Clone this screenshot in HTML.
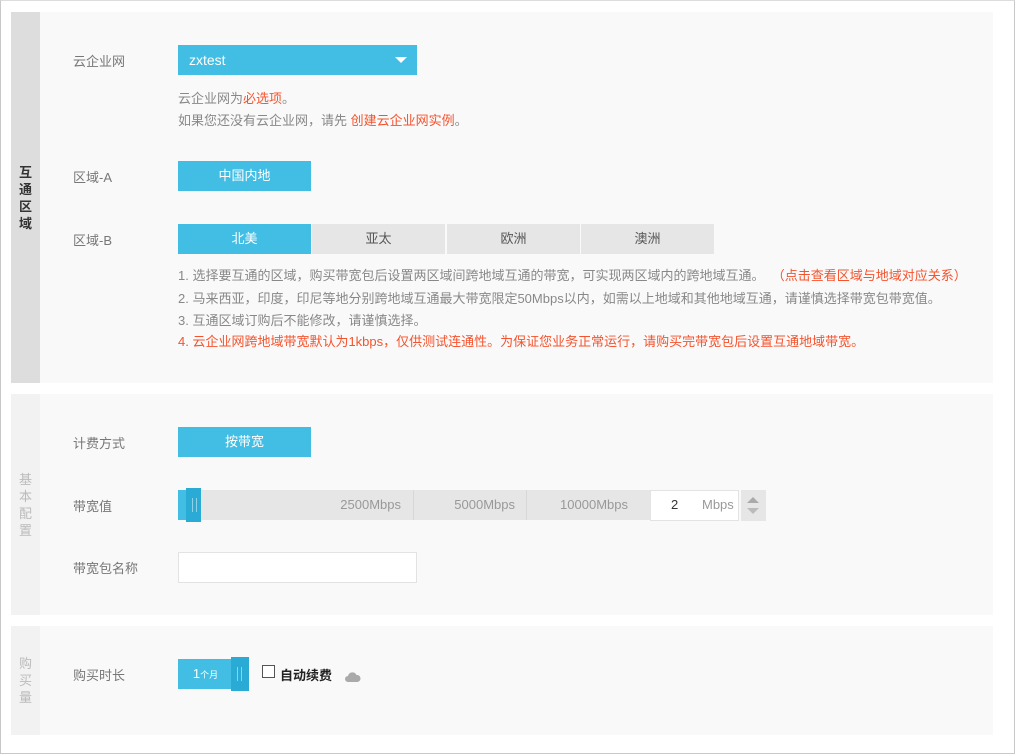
<!DOCTYPE html>
<html><head><meta charset="utf-8"><style>
*{margin:0;padding:0;box-sizing:border-box}
body{width:1015px;height:754px;background:#fff;font-family:"Liberation Sans","Noto Sans CJK SC",sans-serif;font-size:13px;color:#666;position:relative;overflow:hidden}
.frame{position:absolute;left:0;top:0;width:1015px;height:754px;border:1px solid #c8c8c8;border-top-color:#ddd}
.sec{position:absolute;left:11px;width:982px;background:#f9f9f9}
.lab{position:absolute;left:0;top:0;bottom:0;width:29px;background:#f2f2f2;color:#bbb;font-size:13px;display:flex;align-items:center;justify-content:center;text-align:center;line-height:17px}
.a{position:absolute;font-size:13px;color:#777}
.btn{position:absolute;height:30px;line-height:30px;text-align:center;color:#fff;background:#42bde3;font-size:13px}
.g{background:#e6e6e6;color:#555}
.t{position:absolute;font-size:13px;color:#888;white-space:nowrap}
.r{color:#f5532d}
.s{position:absolute;font-size:13px;color:#999;white-space:nowrap;text-align:right}
</style></head><body>
<div class="frame"></div>
<div class="sec" style="top:12px;height:371px">
 <div class="lab" style="background:#ddd;color:#333;font-weight:bold">互<br>通<br>区<br>域</div>
</div>
<div class="sec" style="top:394px;height:221px"><div class="lab">基<br>本<br>配<br>置</div></div>
<div class="sec" style="top:626px;height:109px"><div class="lab">购<br>买<br>量</div></div>

<div class="a" style="left:73px;top:51px">云企业网</div>
<div class="btn" style="left:178px;top:45px;width:239px;text-align:left;padding-left:11px;font-size:14px">zxtest</div>
<div style="position:absolute;left:395px;top:57px;width:0;height:0;border-left:6px solid transparent;border-right:6px solid transparent;border-top:6px solid #fff"></div>
<div class="t" style="left:178px;top:88px">云企业网为<span class="r">必选项</span>。</div>
<div class="t" style="left:178px;top:110px">如果您还没有云企业网，请先 <span class="r">创建云企业网实例</span>。</div>

<div class="a" style="left:73px;top:167px">区域-A</div>
<div class="btn" style="left:178px;top:161px;width:133px">中国内地</div>

<div class="a" style="left:73px;top:230px">区域-B</div>
<div class="btn" style="left:178px;top:224px;width:133px">北美</div>
<div class="btn g" style="left:312px;top:224px;width:133px">亚太</div>
<div class="btn g" style="left:447px;top:224px;width:133px">欧洲</div>
<div class="btn g" style="left:581px;top:224px;width:133px">澳洲</div>
<div class="t" style="left:178px;top:265px">1. 选择要互通的区域，购买带宽包后设置两区域间跨地域互通的带宽，可实现两区域内的跨地域互通。 &nbsp;<span class="r">（点击查看区域与地域对应关系）</span></div>
<div class="t" style="left:178px;top:288px">2. 马来西亚，印度，印尼等地分别跨地域互通最大带宽限定50Mbps以内，如需以上地域和其他地域互通，请谨慎选择带宽包带宽值。</div>
<div class="t" style="left:178px;top:310px">3. 互通区域订购后不能修改，请谨慎选择。</div>
<div class="t r" style="left:178px;top:331px">4. 云企业网跨地域带宽默认为1kbps，仅供测试连通性。为保证您业务正常运行，请购买完带宽包后设置互通地域带宽。</div>

<div class="a" style="left:73px;top:433px">计费方式</div>
<div class="btn" style="left:178px;top:427px;width:133px">按带宽</div>

<div class="a" style="left:73px;top:496px">带宽值</div>
<div style="position:absolute;left:178px;top:490px;width:472px;height:30px;background:#e6e6e6"></div>
<div style="position:absolute;left:413px;top:490px;width:1px;height:30px;background:#d8d8d8"></div>
<div style="position:absolute;left:526px;top:490px;width:1px;height:30px;background:#d8d8d8"></div>
<div class="s" style="left:300px;width:101px;top:497px">2500Mbps</div>
<div class="s" style="left:414px;width:101px;top:497px">5000Mbps</div>
<div class="s" style="left:527px;width:101px;top:497px">10000Mbps</div>
<div style="position:absolute;left:178px;top:490px;width:10px;height:30px;background:#42bde3"></div>
<div style="position:absolute;left:186px;top:488px;width:15px;height:34px;background:#2aabd6"></div>
<div style="position:absolute;left:192px;top:498px;width:1px;height:14px;background:#8cd3ea"></div>
<div style="position:absolute;left:196px;top:498px;width:1px;height:14px;background:#8cd3ea"></div>
<div style="position:absolute;left:650px;top:490px;width:89px;height:31px;background:#fff;border:1px solid #e3e3e3"></div>
<div class="t" style="left:671px;top:497px;color:#333">2</div>
<div class="t" style="left:702px;top:497px;color:#999">Mbps</div>
<div style="position:absolute;left:741px;top:490px;width:25px;height:31px;background:#e6e6e6"></div>
<div style="position:absolute;left:747px;top:497px;border-left:6px solid transparent;border-right:6px solid transparent;border-bottom:6px solid #aaa"></div>
<div style="position:absolute;left:747px;top:508px;border-left:6px solid transparent;border-right:6px solid transparent;border-top:6px solid #bbb"></div>

<div class="a" style="left:73px;top:558px">带宽包名称</div>
<div style="position:absolute;left:178px;top:552px;width:239px;height:31px;background:#fff;border:1px solid #e3e3e3"></div>

<div class="a" style="left:73px;top:665px">购买时长</div>
<div class="btn" style="left:178px;top:659px;width:55px;height:30px;line-height:30px;font-size:13px">1<span style="font-size:9px">个月</span></div>
<div style="position:absolute;left:231px;top:657px;width:18px;height:34px;background:#2aabd6"></div>
<div style="position:absolute;left:237px;top:667px;width:1px;height:14px;background:#8cd3ea"></div>
<div style="position:absolute;left:241px;top:667px;width:1px;height:14px;background:#8cd3ea"></div>
<div style="position:absolute;left:262px;top:665px;width:13px;height:13px;border:1px solid #555;background:#fff"></div>
<div class="t" style="left:280px;top:665px;color:#222;font-weight:bold">自动续费</div>
<svg style="position:absolute;left:345px;top:671px" width="16" height="12" viewBox="0 0 16 12"><path d="M3 11a3 3 0 0 1 0-6a4.5 4.5 0 0 1 8.5-1a3.5 3.5 0 0 1 1 7z" fill="#aaa"/></svg>
</body></html>
